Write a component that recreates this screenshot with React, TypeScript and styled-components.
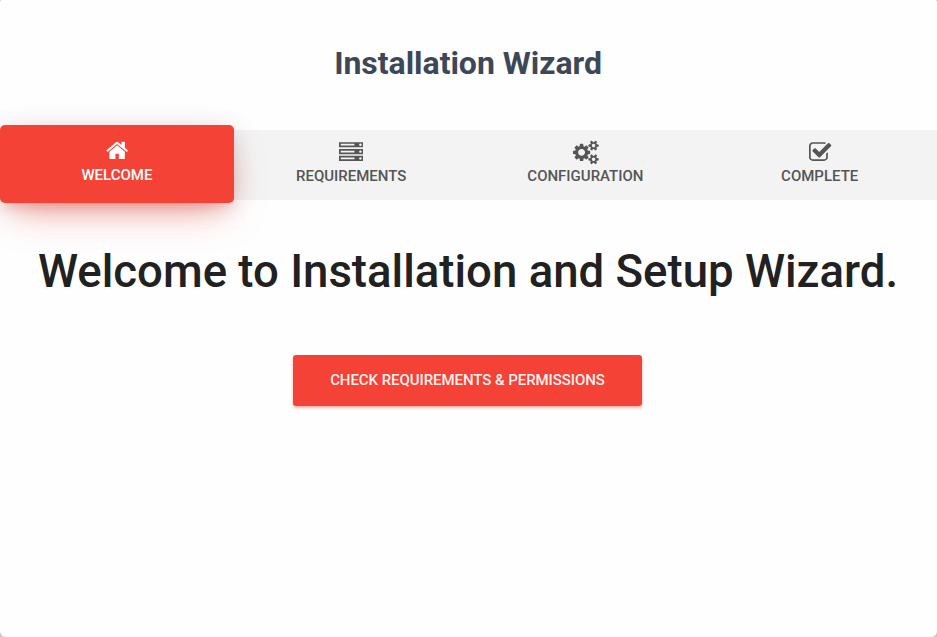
import React from "react";
import styled, { createGlobalStyle } from "styled-components";

const GlobalStyle = createGlobalStyle`
  *, *::before, *::after { box-sizing: border-box; }
  body { margin: 0; background: #c8c8c8; font-family: Roboto, "Liberation Sans", sans-serif; }
`;

const Card = styled.main`
  height: 637px;
  overflow: hidden;
  background: #fefefe;
  border-radius: 2px 2px 6px 6px;
  text-align: center;
`;

const Title = styled.h1`
  margin: 0;
  padding: 40px 1px 0 0;
  height: 130px;
  font-size: 32px;
  line-height: 46px;
  letter-spacing: -0.03px;
  font-weight: 700;
  color: #3c4858;
`;

const Steps = styled.nav`
  display: grid;
  grid-template-columns: repeat(4, 1fr);
  height: 70px;
  background: #f3f3f3;
`;

const Step = styled.a<{ $active?: boolean }>`
  display: flex;
  flex-direction: column;
  align-items: center;
  height: ${(p) => (p.$active ? 78 : 70)}px;
  margin-top: ${(p) => (p.$active ? -5 : 0)}px;
  padding: ${(p) => (p.$active ? 13 : 10)}px 0.4px 0 0;
  gap: ${(p) => (p.$active ? 3 : 2)}px;
  border-radius: ${(p) => (p.$active ? 5 : 0)}px;
  background: ${(p) => (p.$active ? "#f44336" : "transparent")};
  color: ${(p) => (p.$active ? "#fff" : "#555")};
  box-shadow: ${(p) =>
    p.$active
      ? "0 16px 38px -12px rgba(244, 67, 54, 0.56), 0 4px 25px 0 rgba(0, 0, 0, 0.12), 0 8px 10px -5px rgba(244, 67, 54, 0.2)"
      : "none"};
  font-size: 15px;
  line-height: 20px;
  font-weight: 500;
  text-transform: uppercase;
`;

const Icon = styled.svg`
  display: block;
  height: 24px;
  fill: currentColor;
`;

const Heading = styled.h2`
  margin: 0;
  padding: 42px 1px 0 0;
  height: 155px;
  font-size: 45.55px;
  line-height: 60px;
  font-weight: 500;
  color: #212121;
  white-space: nowrap;
`;

const Button = styled.button`
  width: 349px;
  height: 51px;
  margin-right: 2px;
  padding: 0;
  border: 0;
  border-radius: 3px;
  background: #f44336;
  color: rgba(255, 255, 255, 0.94);
  box-shadow: 0 2px 3px rgba(244, 67, 54, 0.4);
  font: 500 15px/51px Roboto, "Liberation Sans", sans-serif;
  letter-spacing: -0.06px;
  text-transform: uppercase;
`;

const smallGear =
  "v-140q0 -16 -149 -31q-12 -27 -30 -52q51 -113 51 -138q0 -4 -4 -7q-122 -71 -124 -71q-8 0 -46 47t-52 68q-20 -2 -30 -2t-30 2q-14 -21 -52 -68t-46 -47q-2 0 -124 71q-4 3 -4 7q0 25 51 138q-18 25 -30 52q-149 15 -149 31v140q0 16 149 31q13 29 30 52q-51 113 -51 138q0 4 4 7q4 2 35 20t59 34t30 16q8 0 46 -46.5t52 -67.5q20 2 30 2t30 -2q51 71 92 112l6 2q4 0 124 -70q4 -3 4 -7q0 -25 -51 -138q17 -23 30 -52q149 -15 149 -31z";
const dot = "q0 -40 -28 -68t-68 -28t-68 28t-28 68t28 68t68 28t68 -28t28 -68z";

const steps = [
  {
    label: "Welcome",
    width: 1664,
    path: "M1408 544v-480q0 -26 -19 -45t-45 -19h-384v384h-256v-384h-384q-26 0 -45 19t-19 45v480q0 1 0.5 3t0.5 3l575 474l575 -474q1 -2 1 -6zM1631 613l-62 -74q-8 -9 -21 -11h-3q-13 0 -21 7l-692 577l-692 -577q-12 -8 -24 -7q-13 2 -21 11l-62 74q-8 10 -7 23.5t11 21.5l719 599q32 26 76 26t76 -26l244 -204v195q0 14 9 23t23 9h192q14 0 23 -9t9 -23v-408l219 -182q10 -8 11 -21.5t-7 -23.5z",
  },
  {
    label: "Requirements",
    width: 1792,
    path: `M128 128h1024v128h-1024v-128zM128 640h1024v128h-1024v-128zM1696 192${dot}M128 1152h1024v128h-1024v-128zM1696 704${dot}M1696 1216${dot}M1792 384v-384h-1792v384h1792zM1792 896v-384h-1792v384h1792zM1792 1408v-384h-1792v384h1792z`,
  },
  {
    label: "Configuration",
    width: 1920,
    path: `M896 640q0 106 -75 181t-181 75t-181 -75t-75 -181t75 -181t181 -75t181 75t75 181zM1664 128q0 52 -38 90t-90 38t-90 -38t-38 -90q0 -53 37.5 -90.5t90.5 -37.5t90.5 37.5t37.5 90.5zM1664 1152q0 52 -38 90t-90 38t-90 -38t-38 -90q0 -53 37.5 -90.5t90.5 -37.5t90.5 37.5t37.5 90.5zM1280 731v-185q0 -10 -7 -19.5t-16 -10.5l-155 -24q-11 -35 -32 -76q34 -48 90 -115q7 -11 7 -20q0 -12 -7 -19q-23 -30 -82.5 -89.5t-78.5 -59.5q-11 0 -21 7l-115 90q-37 -19 -77 -31q-11 -108 -23 -155q-7 -24 -30 -24h-186q-11 0 -20 7.5t-10 17.5l-23 153q-34 10 -75 31l-118 -89q-7 -7 -20 -7q-11 0 -21 8q-144 133 -144 160q0 9 7 19q10 14 41 53t47 61q-23 44 -35 82l-152 24q-10 1 -17 9.5t-7 19.5v185q0 10 7 19.5t16 10.5l155 24q11 35 32 76q-34 48 -90 115q-7 11 -7 20q0 12 7 20q22 30 82 89t79 59q11 0 21 -7l115 -90q34 18 77 32q11 108 23 154q7 24 30 24h186q11 0 20 -7.5t10 -17.5l23 -153q34 -10 75 -31l118 89q8 7 20 7q11 0 21 -8q144 -133 144 -160q0 -8 -7 -19q-12 -16 -42 -54t-45 -60q23 -48 34 -82l152 -23q10 -2 17 -10.5t7 -19.5zM1920 198${smallGear}M1920 1222${smallGear}`,
  },
  {
    label: "Complete",
    width: 1664,
    path: "M1408 606v-318q0 -119 -84.5 -203.5t-203.5 -84.5h-832q-119 0 -203.5 84.5t-84.5 203.5v832q0 119 84.5 203.5t203.5 84.5h832q63 0 117 -25q15 -7 18 -23q3 -17 -9 -29l-49 -49q-10 -10 -23 -10q-3 0 -9 2q-23 6 -45 6h-832q-66 0 -113 -47t-47 -113v-832q0 -66 47 -113t113 -47h832q66 0 113 47t47 113v254q0 13 9 22l64 64q10 10 23 10q6 0 12 -3q20 -8 20 -29zM1639 1095l-814 -814q-24 -24 -57 -24t-57 24l-430 430q-24 24 -24 57t24 57l110 110q24 24 57 24t57 -24l263 -263l647 647q24 24 57 24t57 -24l110 -110q24 -24 24 -57t-24 -57z",
  },
];

export default function App() {
  return (
    <Card>
      <GlobalStyle />
      <Title>Installation Wizard</Title>
      <Steps>
        {steps.map((s, i) => (
          <Step key={s.label} $active={i === 0}>
            <Icon viewBox={`0 -1568 ${s.width} 1792`} overflow="visible" aria-hidden="true">
              <path transform="scale(1 -1)" fillRule="evenodd" d={s.path} />
            </Icon>
            <span>{s.label}</span>
          </Step>
        ))}
      </Steps>
      <Heading>Welcome to Installation and Setup Wizard.</Heading>
      <Button>Check Requirements &amp; Permissions</Button>
    </Card>
  );
}
